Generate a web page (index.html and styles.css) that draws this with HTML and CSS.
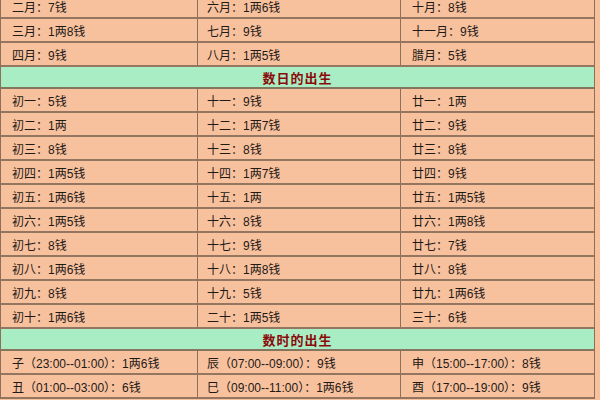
FILE: index.html
```html
<!DOCTYPE html>
<html lang="zh">
<head>
<meta charset="utf-8">
<link rel="stylesheet" href="styles.css">
</head>
<body>
<div class="sheet">
  <div class="row"><div class="cell">二月：7钱</div><div class="cell">六月：1两6钱</div><div class="cell">十月：8钱</div></div>
  <div class="row"><div class="cell">三月：1两8钱</div><div class="cell">七月：9钱</div><div class="cell">十一月：9钱</div></div>
  <div class="row"><div class="cell">四月：9钱</div><div class="cell">八月：1两5钱</div><div class="cell">腊月：5钱</div></div>
  <div class="band">数日的出生</div>
  <div class="row"><div class="cell">初一：5钱</div><div class="cell">十一：9钱</div><div class="cell">廿一：1两</div></div>
  <div class="row"><div class="cell">初二：1两</div><div class="cell">十二：1两7钱</div><div class="cell">廿二：9钱</div></div>
  <div class="row"><div class="cell">初三：8钱</div><div class="cell">十三：8钱</div><div class="cell">廿三：8钱</div></div>
  <div class="row"><div class="cell">初四：1两5钱</div><div class="cell">十四：1两7钱</div><div class="cell">廿四：9钱</div></div>
  <div class="row"><div class="cell">初五：1两6钱</div><div class="cell">十五：1两</div><div class="cell">廿五：1两5钱</div></div>
  <div class="row"><div class="cell">初六：1两5钱</div><div class="cell">十六：8钱</div><div class="cell">廿六：1两8钱</div></div>
  <div class="row"><div class="cell">初七：8钱</div><div class="cell">十七：9钱</div><div class="cell">廿七：7钱</div></div>
  <div class="row"><div class="cell">初八：1两6钱</div><div class="cell">十八：1两8钱</div><div class="cell">廿八：8钱</div></div>
  <div class="row"><div class="cell">初九：8钱</div><div class="cell">十九：5钱</div><div class="cell">廿九：1两6钱</div></div>
  <div class="row"><div class="cell">初十：1两6钱</div><div class="cell">二十：1两5钱</div><div class="cell">三十：6钱</div></div>
  <div class="band">数时的出生</div>
  <div class="row"><div class="cell">子（23:00--01:00）：1两6钱</div><div class="cell">辰（07:00--09:00）：9钱</div><div class="cell">申（15:00--17:00）：8钱</div></div>
  <div class="row"><div class="cell">丑（01:00--03:00）：6钱</div><div class="cell">巳（09:00--11:00）：1两6钱</div><div class="cell">酉（17:00--19:00）：9钱</div></div>
</div>
</body>
</html>
```

FILE: styles.css
```css
html, body {
  margin: 0;
  padding: 0;
  background: #f8c19e;
  overflow: hidden;
}
body {
  width: 600px;
  height: 400px;
  font-family: "Liberation Sans", "Noto Sans CJK SC", sans-serif;
  font-size: 12px;
  color: #1e1a16;
}
.sheet {
  width: 595px;
  margin-top: -5px;
  border-left: 1px solid #8c7058;
  border-right: 1px solid #8c7058;
  box-sizing: border-box;
}
.row {
  display: grid;
  grid-template-columns: 197px 203px 1fr;
  height: 24px;
  box-sizing: border-box;
  border-bottom: 2px solid #947660;
  background: #f8c19e;
}
.cell {
  display: flex;
  align-items: center;
  padding-left: 11px;
  border-right: 1px solid #8c7058;
  white-space: nowrap;
}
.row .cell:nth-child(2) {
  padding-left: 9px;
}
.cell:last-child {
  border-right: none;
}
.band {
  height: 22px;
  box-sizing: border-box;
  border-bottom: 2px solid #84765e;
  background: #a9edc4;
  display: flex;
  align-items: center;
  justify-content: center;
  font-size: 13px;
  font-weight: bold;
  color: #8b0a0a;
  letter-spacing: 1px;
  padding-top: 1px;
}
```
